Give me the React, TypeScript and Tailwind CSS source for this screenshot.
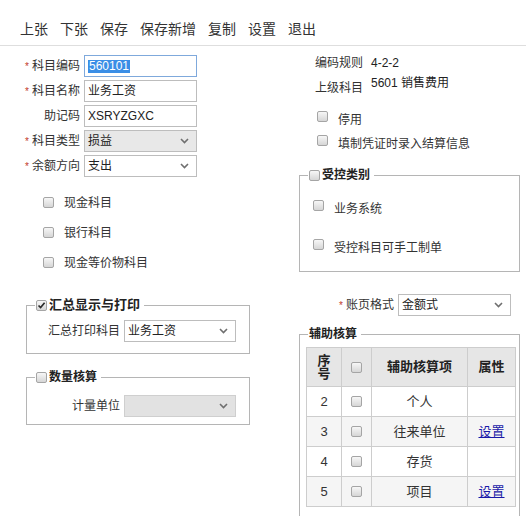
import React from "react";

interface AuxRow {
  no: number;
  name: string;
  hasAttr: boolean;
}

const toolbarItems = ["上张", "下张", "保存", "保存新增", "复制", "设置", "退出"];

const auxRows: AuxRow[] = [
  { no: 2, name: "个人", hasAttr: false },
  { no: 3, name: "往来单位", hasAttr: true },
  { no: 4, name: "存货", hasAttr: false },
  { no: 5, name: "项目", hasAttr: true },
];

function CheckBox({ checked = false }: { checked?: boolean }) {
  return (
    <span className="flex items-center justify-center w-[11px] h-[11px] shrink-0 rounded-[2px] border border-[#a5a5a5] bg-linear-to-b from-[#f7f7f7] to-[#d6d6d6]">
      {checked && (
        <svg width="9" height="9" viewBox="0 0 9 9">
          <path d="M1.5 4.5 L3.6 6.6 L7.6 1.8" stroke="#2b2b2b" strokeWidth="1.7" fill="none" />
        </svg>
      )}
    </span>
  );
}

function Chevron() {
  return (
    <svg width="9" height="6" viewBox="0 0 9 6" className="shrink-0">
      <path d="M1 1 L4.5 4.5 L8 1" stroke="#6f6f6f" strokeWidth="1.6" fill="none" />
    </svg>
  );
}

type SelectTone = "white" | "gray" | "disabled";

function SelectBox({ value, tone = "white" }: { value?: string; tone?: SelectTone }) {
  const look =
    tone === "gray"
      ? "bg-[#e8e8e8] border-[#bdbdbd]"
      : tone === "disabled"
        ? "bg-[#e2e2e2] border-[#cfcfcf]"
        : "bg-white border-[#bdbdbd]";
  return (
    <div className={`flex items-center justify-between h-[22px] border ${look} pl-[3px] pr-[7px] text-[12px] text-[#222]`}>
      <span>{value}</span>
      <Chevron />
    </div>
  );
}

function FormRow({ label, required, children }: { label: string; required?: boolean; children: React.ReactNode }) {
  return (
    <div className="flex items-center h-[22px]">
      <div className="w-[80px] text-right text-[12px] text-[#333] whitespace-nowrap">
        {required && <span className="text-[#c23a2b] text-[10px] mr-[3px]">*</span>}
        {label}
      </div>
      <div className="ml-[4px] w-[113px]">{children}</div>
    </div>
  );
}

function CheckLine({ label }: { label: string }) {
  return (
    <div className="flex items-center h-[30px] pl-[43px] gap-[10px] text-[12px] text-[#333]">
      <span className="-mt-[2px]">
        <CheckBox />
      </span>
      <span>{label}</span>
    </div>
  );
}

export default function App() {
  return (
    <div className="w-[526px] h-[516px] overflow-hidden bg-white text-[#333] font-[Liberation_Sans,Noto_Sans_CJK_SC,sans-serif]">
      {/* toolbar */}
      <div className="h-[46px] border-b border-[#dedede] flex items-end pb-[6px] pl-[20px] gap-[12px] text-[14px] leading-[20px] text-[#333]">
        {toolbarItems.map((t) => (
          <span key={t}>{t}</span>
        ))}
      </div>

      <div className="flex">
        {/* left column */}
        <div className="w-[299px] shrink-0">
          <div className="mt-[9px] flex flex-col gap-[3px]">
            <FormRow label="科目编码" required>
              <div className="h-[22px] border border-[#7fa9dc] bg-white pl-[3px] flex items-center text-[12px]">
                <span className="bg-[#3a8ee6] text-white px-[1px] leading-[13px]">560101</span>
              </div>
            </FormRow>
            <FormRow label="科目名称" required>
              <div className="h-[22px] border border-[#bdbdbd] bg-white pl-[3px] flex items-center text-[12px] text-[#222]">业务工资</div>
            </FormRow>
            <FormRow label="助记码">
              <div className="h-[22px] border border-[#bdbdbd] bg-white pl-[3px] flex items-center text-[12px] text-[#222]">XSRYZGXC</div>
            </FormRow>
            <FormRow label="科目类型" required>
              <SelectBox value="损益" tone="gray" />
            </FormRow>
            <FormRow label="余额方向" required>
              <SelectBox value="支出" />
            </FormRow>
          </div>

          <div className="mt-[11px]">
            <CheckLine label="现金科目" />
            <CheckLine label="银行科目" />
            <CheckLine label="现金等价物科目" />
          </div>

          {/* 汇总显示与打印 */}
          <fieldset className="ml-[26px] w-[224px] mt-[18px] pb-[11px] border border-[#b5b5b5]">
            <legend className="ml-[8px] px-[1px]">
              <span className="flex items-center gap-[2px] h-[18px] text-[13px] font-bold text-[#222] pr-[3px]">
                <CheckBox checked />
                汇总显示与打印
              </span>
            </legend>
            <div className="flex items-center mt-[6px]">
              <div className="w-[93px] text-right text-[12px] text-[#333]">汇总打印科目</div>
              <div className="ml-[4px] w-[112px]">
                <SelectBox value="业务工资" />
              </div>
            </div>
          </fieldset>

          {/* 数量核算 */}
          <fieldset className="ml-[26px] w-[224px] mt-[14px] pb-[7px] border border-[#b5b5b5]">
            <legend className="ml-[8px] px-[1px]">
              <span className="flex items-center gap-[2px] h-[18px] text-[12px] font-bold text-[#222] pr-[3px]">
                <CheckBox />
                数量核算
              </span>
            </legend>
            <div className="flex items-center mt-[9px]">
              <div className="w-[93px] text-right text-[12px] text-[#333]">计量单位</div>
              <div className="ml-[4px] w-[112px]">
                <SelectBox tone="disabled" />
              </div>
            </div>
          </fieldset>
        </div>

        {/* right column */}
        <div className="w-[221px] shrink-0">
          <div className="mt-[8px] flex items-center pl-[16px] text-[12px] leading-[18px]">
            <span className="w-[56px] text-[#333]">编码规则</span>
            <span className="text-[#222]">4-2-2</span>
          </div>
          <div className="mt-[2px] flex items-start pl-[16px] text-[12px] leading-[18px]">
            <span className="w-[56px] pt-[5px] text-[#333]">上级科目</span>
            <span className="text-[#222]">5601 销售费用</span>
          </div>

          <div className="mt-[11px] flex items-start h-[24px] pl-[18px] gap-[10px] text-[12px] leading-[24px]">
            <span className="mt-[3px]">
              <CheckBox />
            </span>
            <span>停用</span>
          </div>
          <div className="flex items-start h-[24px] pl-[18px] gap-[10px] text-[12px] leading-[24px]">
            <span className="mt-[3px]">
              <CheckBox />
            </span>
            <span>填制凭证时录入结算信息</span>
          </div>

          {/* 受控类别 */}
          <fieldset className="mt-[10px] w-[221px] pb-[11px] border border-[#b5b5b5]">
            <legend className="ml-[8px] px-[1px]">
              <span className="flex items-center gap-[2px] h-[18px] text-[12px] font-bold text-[#222] pr-[3px]">
                <CheckBox />
                受控类别
              </span>
            </legend>
            <div className="mt-[13px] flex flex-col gap-[15px] text-[12px]">
              <div className="flex items-start h-[24px] pl-[13px] gap-[10px] leading-[24px]">
                <span className="mt-[3px]">
                  <CheckBox />
                </span>
                <span>业务系统</span>
              </div>
              <div className="flex items-start h-[24px] pl-[13px] gap-[10px] leading-[24px]">
                <span className="mt-[3px]">
                  <CheckBox />
                </span>
                <span>受控科目可手工制单</span>
              </div>
            </div>
          </fieldset>

          <div className="mt-[22px] flex items-center justify-end pr-[9px] text-[12px]">
            <span className="text-[#333]">
              <span className="text-[#c23a2b] text-[10px] mr-[3px]">*</span>账页格式
            </span>
            <div className="ml-[4px] w-[113px]">
              <SelectBox value="金额式" />
            </div>
          </div>

          {/* 辅助核算 */}
          <fieldset className="mt-[9px] w-[221px] pb-[20px] border border-[#b5b5b5]">
            <legend className="ml-[8px] px-[1px]">
              <span className="flex items-center h-[18px] text-[12px] font-bold text-[#222] pr-[3px]">辅助核算</span>
            </legend>
            <table className="mt-[4px] ml-[6px] w-[209px] table-fixed border-collapse text-[13px] text-[#333]">
              <thead>
                <tr className="h-[39px] bg-[#e6e6e6] text-[#222]">
                  <th className="w-[35px] border border-[#cdcdcd] font-bold leading-[13px] px-[10px]">序号</th>
                  <th className="w-[30px] border border-[#cdcdcd]">
                    <span className="flex justify-center">
                      <CheckBox />
                    </span>
                  </th>
                  <th className="w-[96px] border border-[#cdcdcd] font-bold">辅助核算项</th>
                  <th className="w-[48px] border border-[#cdcdcd] font-bold">属性</th>
                </tr>
              </thead>
              <tbody>
                {auxRows.map((r, i) => (
                  <tr key={r.no} className={`h-[30px] ${i % 2 === 1 ? "bg-[#f5f5f5]" : "bg-white"}`}>
                    <td className="border border-[#cdcdcd] text-center">{r.no}</td>
                    <td className="border border-[#cdcdcd]">
                      <span className="flex justify-center">
                        <CheckBox />
                      </span>
                    </td>
                    <td className="border border-[#cdcdcd] text-center">{r.name}</td>
                    <td className="border border-[#cdcdcd] text-center">
                      {r.hasAttr && <span className="text-[#1a1aa8] underline">设置</span>}
                    </td>
                  </tr>
                ))}
              </tbody>
            </table>
          </fieldset>
        </div>
      </div>
    </div>
  );
}
